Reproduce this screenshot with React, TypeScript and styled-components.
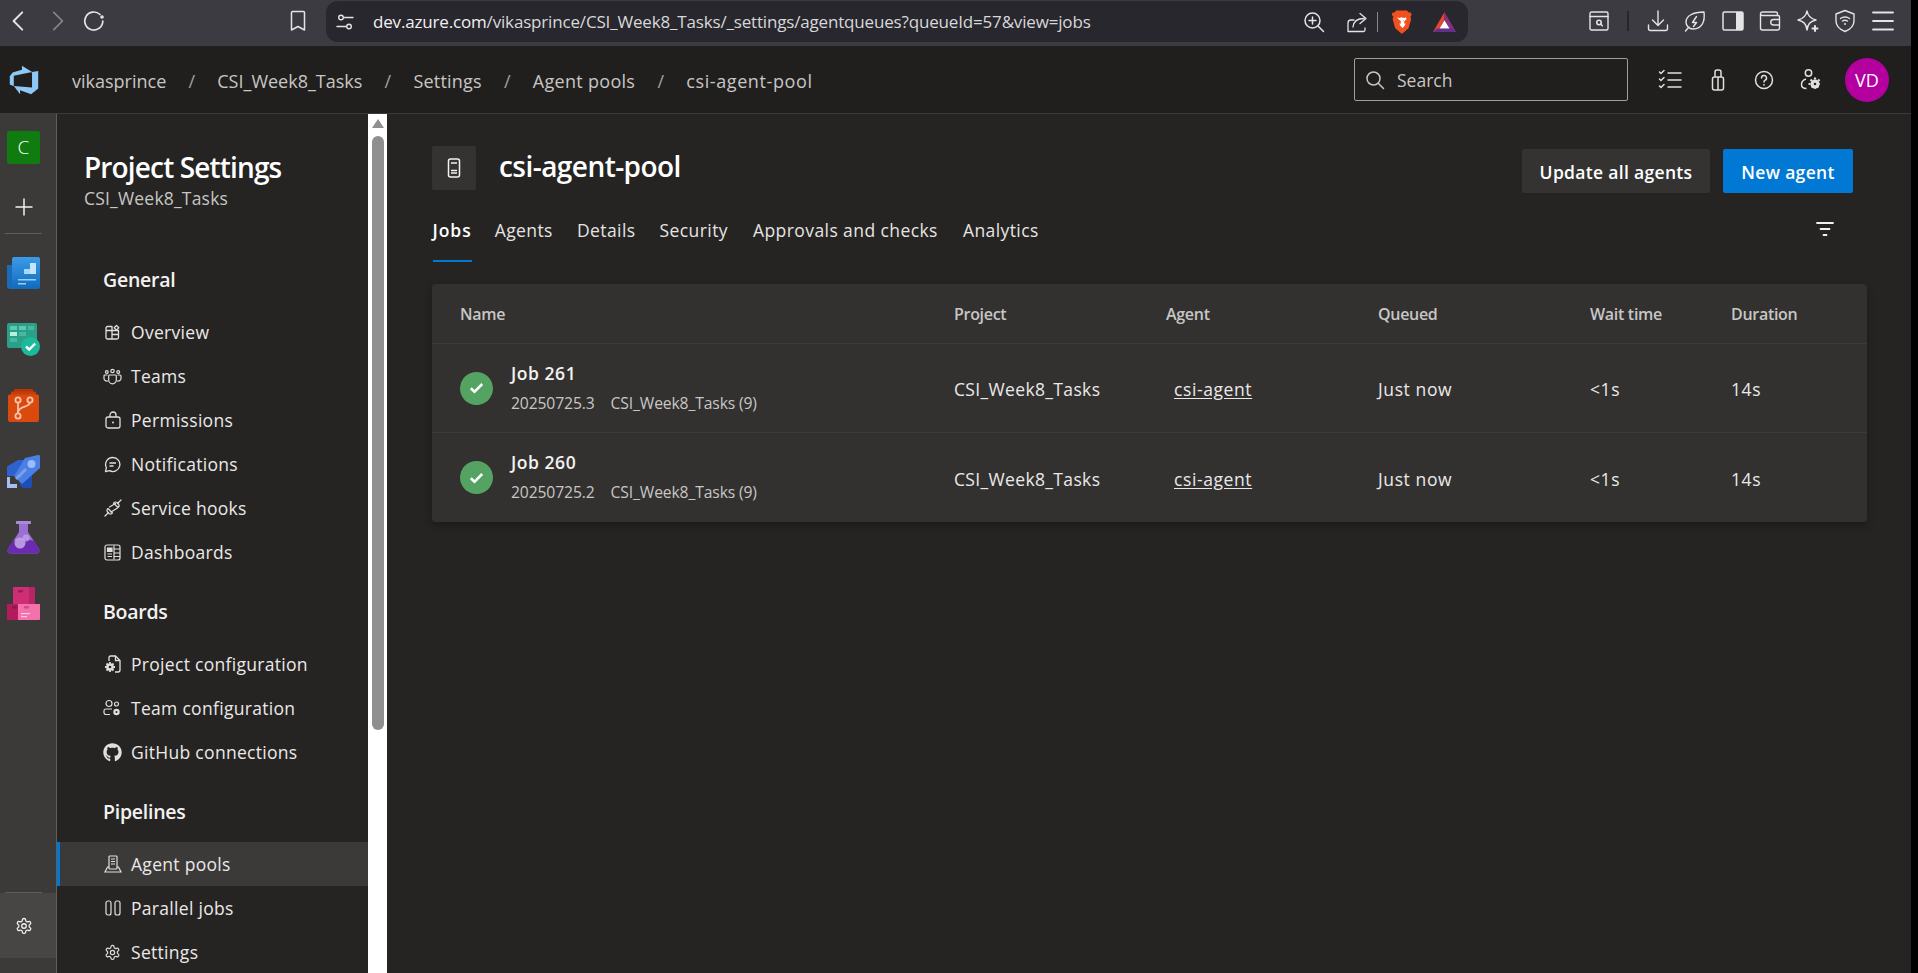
import React from "react";
import styled, { createGlobalStyle } from "styled-components";
import { FaGithub } from "react-icons/fa";

const Global = createGlobalStyle`
  html, body { margin: 0; padding: 0; height: 100%; background: #000; overflow: hidden; }
  body { font-family: "Open Sans", "Noto Sans", "Liberation Sans", sans-serif; }
  * { box-sizing: border-box; }
`;

const Page = styled.div`
  width: 1911px; height: 973px; display: flex; flex-direction: column; overflow: hidden; background: #252423;
`;

/* ---------- browser bar ---------- */
const BrowserBar = styled.div`
  height: 46px; background: #3b3b41; display: flex; align-items: flex-start; color: #e4e4e6; flex: none;
`;
const BrowserSlot = styled.div<{ $w?: number; $dim?: boolean }>`
  width: ${p => p.$w ?? 37.5}px; height: 41px; flex: none; display: flex; align-items: center; justify-content: center;
  color: ${p => (p.$dim ? "#85858b" : "#e4e4e6")};
`;
const BrowserNav = styled.div`
  display: flex; width: 326px; flex: none; padding-left: 0.5px;
`;
const NavGap = styled.div`
  width: 166px; flex: none;
`;
const AddressBar = styled.div`
  width: 1142px; height: 41px; margin-top: 1px; background: #27272d; border-radius: 12px; display: flex; align-items: center;
  padding-left: 8px; flex: none;
`;
const Url = styled.div`
  font-size: 17px; color: #d8d8da; letter-spacing: -0.17px; margin-left: 17px; flex: 1; white-space: nowrap;
`;
const UrlHost = styled.span`
  color: #f1f1f2;
`;
const AddressTail = styled.div`
  display: flex; align-items: center; padding-right: 12.5px; flex: none;
`;
const ZoomGap = styled.div`
  width: 11px; flex: none;
`;
const AddressSep = styled.div`
  width: 1px; height: 20px; background: #88888c; margin-right: 13px; flex: none;
`;
const ToolbarSep = styled.div`
  width: 2px; height: 20px; background: #26262b; margin: 0 10px 0 18px; flex: none;
`;
const BrowserTail = styled.div`
  display: flex; padding-left: 121px; flex: none; align-items: center;
`;

/* ---------- app header ---------- */
const Header = styled.header`
  height: 68px; background: #201f1e; border-bottom: 1px solid #3b3a39; display: flex; align-items: center; flex: none; color: #c8c6c4;
`;
const Logo = styled.div`
  width: 72px; padding-left: 8px; flex: none; display: flex; align-items: center;
`;
const Crumbs = styled.nav`
  display: flex; align-items: center; font-size: 18px; flex: 1; padding-top: 2px;
`;
const Crumb = styled.span<{ $ls: number }>`
  letter-spacing: ${p => p.$ls}px;
`;
const Slash = styled.span`
  width: 51px; text-align: center; color: #a19f9d; flex: none;
`;
const SearchBox = styled.div`
  width: 274px; height: 43px; border: 1px solid #a19f9d; border-radius: 2px; display: flex; align-items: center; padding-left: 10px; gap: 12px;
  font-size: 17.5px; color: #c8c6c4; flex: none; margin-right: 17px;
`;
const HeadIcon = styled.div<{ $w: number }>`
  width: ${p => p.$w}px; flex: none; display: flex; align-items: center; justify-content: center; color: #e1dfdd;
`;
const Avatar = styled.div`
  width: 44px; height: 44px; border-radius: 50%; background: #b4009e; color: #fff; font-size: 18px; display: flex; align-items: center;
  justify-content: center; margin-left: 11px; margin-right: 22px; flex: none;
`;

/* ---------- body ---------- */
const Body = styled.div`
  flex: 1; display: flex; min-height: 0;
`;
const Rail = styled.aside`
  width: 57px; background: #3b3a39; border-right: 1px solid #605e5c; display: flex; flex-direction: column; flex: none;
`;
const RailItem = styled.div<{ $h?: number }>`
  width: 47px; height: ${p => p.$h ?? 66}px; display: flex; align-items: center; justify-content: center; flex: none; color: #f3f2f1;
`;
const ProjectTile = styled.div`
  width: 33px; height: 33px; background: #107c10; border-radius: 2px; color: #fff; font-size: 19px; font-weight: 300; display: flex; align-items: center; justify-content: center;
`;
const RailDivider = styled.div`
  width: 37px; height: 1px; background: #605e5c; margin: 0 0 6px 5px; flex: none;
`;
const RailBottom = styled.div`
  margin-top: auto; flex: none; padding-bottom: 15px;
`;
const RailBottomLine = styled(RailDivider)`
  margin: 0 0 0 5px;
`;
const RailSettings = styled.div`
  width: 56px; height: 65px; background: #484644; display: flex; align-items: center; justify-content: center; color: #f3f2f1; padding-right: 9px;
`;

const Sidebar = styled.nav`
  width: 311px; background: #252423; flex: none; overflow: hidden; padding-top: 35px;
`;
const SidebarTitle = styled.div`
  margin-left: 27px; font-size: 28px; line-height: 36px; font-weight: 600; color: #fff; letter-spacing: -0.85px; white-space: nowrap;
`;
const SidebarSub = styled.div`
  margin-left: 27px; font-size: 17.5px; line-height: 26px; color: #c8c6c4; letter-spacing: 0.2px;
`;
const GroupTitle = styled.div<{ $top: number }>`
  margin: ${p => p.$top}px 0 14px 46px; font-size: 19.5px; line-height: 32px; font-weight: 600; color: #f3f2f1; letter-spacing: -0.25px;
`;
const NavItem = styled.div<{ $active?: boolean }>`
  height: 44px; display: flex; align-items: center; padding-left: ${p => (p.$active ? 43 : 46)}px; gap: 9px; font-size: 17.5px; color: #ebe9e8; letter-spacing: 0.3px;
  background: ${p => (p.$active ? "#3b3a39" : "transparent")};
  border-left: ${p => (p.$active ? "3px solid #0078d4" : "none")};
`;
const NavIcon = styled.span`
  width: 19px; height: 19px; flex: none; display: flex; align-items: center; justify-content: center; color: #e1dfdd;
`;
const ScrollTrack = styled.div`
  width: 19px; background: #fff; flex: none; padding: 5px 3px 0 4px; display: flex; flex-direction: column;
`;
const ScrollArrow = styled.div`
  width: 0; height: 0; border-left: 6px solid transparent; border-right: 6px solid transparent; border-bottom: 9px solid #8f8f8f; flex: none;
`;
const ScrollThumb = styled.div`
  height: 594px; margin-top: 8px; background: #8f8f8f; border-radius: 6px; flex: none; width: 12px;
`;

const Main = styled.main`
  flex: 1; min-width: 0; padding: 32px 44px 0 45px; background: #252423; color: #f3f2f1;
`;
const TitleRow = styled.div`
  display: flex; align-items: flex-start; height: 44px;
`;
const TitleIcon = styled.div`
  width: 44px; height: 44px; background: #343332; border-radius: 2px; display: flex; align-items: center; justify-content: center; color: #f3f2f1; flex: none;
`;
const Title = styled.h1`
  margin: 0 0 0 23px; font-size: 28px; line-height: 40px; font-weight: 600; color: #fff; letter-spacing: -0.55px; flex: 1;
`;
const Button = styled.button<{ $primary?: boolean }>`
  height: 44px; margin-top: 3px; border: none; border-radius: 2px; font-family: inherit; font-size: 17.5px; font-weight: 600; letter-spacing: 0.32px;
  color: #fff; background: ${p => (p.$primary ? "#0078d4" : "#343332")}; width: ${p => (p.$primary ? 130 : 188)}px; margin-left: 13px; padding: 1px 0 0;
  margin-right: ${p => (p.$primary ? 14 : 0)}px; flex: none;
`;
const TabBar = styled.div`
  display: flex; margin-top: 16px; height: 56px; padding-left: 0.5px;
`;
const Tab = styled.div<{ $active?: boolean; $gap: number }>`
  height: 56px; line-height: 48px; font-size: 17.5px; letter-spacing: ${p => (p.$active ? 0.95 : 0.42)}px; margin-right: ${p => p.$gap}px;
  font-weight: ${p => (p.$active ? 600 : 400)}; color: ${p => (p.$active ? "#fff" : "#e6e4e3")};
  border-bottom: 2px solid ${p => (p.$active ? "#0078d4" : "transparent")};
`;
const FilterBtn = styled.div`
  margin-left: auto; margin-right: 33px; height: 48px; display: flex; align-items: center; padding-bottom: 3px; color: #f3f2f1;
`;
const Card = styled.section`
  margin-top: 22px; background: #323130; border-radius: 4px; box-shadow: 0 3px 8px rgba(0,0,0,.3);
`;
const Row = styled.div<{ $h: number; $last?: boolean }>`
  display: grid; grid-template-columns: 494px 212px 212px 212px 141px 1fr; padding-left: 28px; align-items: center;
  height: ${p => p.$h}px; border-bottom: ${p => (p.$last ? "none" : "1px solid #3b3a39")};
`;
const Th = styled.div`
  font-size: 16px; font-weight: 600; color: #c8c6c4; letter-spacing: -0.3px;
`;
const Td = styled.div`
  font-size: 17.5px; color: #ebe9e8; letter-spacing: 0.35px; white-space: nowrap; padding-top: 2px;
`;
const AgentLink = styled.a`
  margin-left: 8px; color: #ebe9e8; text-decoration: underline; text-underline-offset: 2px; letter-spacing: 0.6px;
`;
const PlainValue = styled.span`
  letter-spacing: 0.6px;
`;
const JobCell = styled.div`
  display: flex; align-items: center; gap: 18px;
`;
const JobStatus = styled.div`
  width: 33px; height: 33px; border-radius: 50%; background: #55a362; display: flex; align-items: center; justify-content: center; flex: none;
`;
const JobText = styled.div`
  display: flex; flex-direction: column; gap: 5px; margin-top: -2px;
`;
const JobName = styled.div`
  font-size: 17.5px; line-height: 26px; font-weight: 600; color: #f3f2f1; letter-spacing: 0.55px;
`;
const JobMeta = styled.div`
  font-size: 15.7px; line-height: 24px; color: #c8c6c4; letter-spacing: -0.13px; display: flex; gap: 16px;
`;

/* ---------- icons ---------- */
const Ico = styled.svg.attrs<{ $s?: number; $sw?: number }>(p => ({
  width: p.$s ?? 24, height: p.$s ?? 24, fill: "none", stroke: "currentColor", strokeWidth: p.$sw ?? 1.5,
  strokeLinecap: "round", strokeLinejoin: "round",
}))<{ $s?: number; $sw?: number }>`
  display: block; flex: none;
`;

const Gear = ({ s = 18 }: { s?: number }) => (
  <Ico $s={s} $sw={1.7} viewBox="0 0 24 24">
    <path d="M12.2 2h-.4a2 2 0 0 0-2 2v.2a2 2 0 0 1-1 1.7l-.4.3a2 2 0 0 1-2 0l-.2-.1a2 2 0 0 0-2.7.7l-.2.4a2 2 0 0 0 .7 2.7l.2.1a2 2 0 0 1 1 1.7v.5a2 2 0 0 1-1 1.7l-.2.1a2 2 0 0 0-.7 2.7l.2.4a2 2 0 0 0 2.7.7l.2-.1a2 2 0 0 1 2 0l.4.3a2 2 0 0 1 1 1.7v.2a2 2 0 0 0 2 2h.4a2 2 0 0 0 2-2v-.2a2 2 0 0 1 1-1.7l.4-.3a2 2 0 0 1 2 0l.2.1a2 2 0 0 0 2.7-.7l.2-.4a2 2 0 0 0-.7-2.7l-.2-.1a2 2 0 0 1-1-1.7v-.5a2 2 0 0 1 1-1.7l.2-.1a2 2 0 0 0 .7-2.7l-.2-.4a2 2 0 0 0-2.7-.7l-.2.1a2 2 0 0 1-2 0l-.4-.3a2 2 0 0 1-1-1.7V4a2 2 0 0 0-2-2z" />
    <circle cx="12" cy="12" r="3" />
  </Ico>
);

const AdoLogo = () => (
  <svg width="32" height="32" viewBox="0 0 18 18">
    <path fill="#8ec8f6" d="M17 4v9.74l-4 3.28-6.2-2.26V17l-3.51-4.59 10.23.8V4.44zm-3.41.49L7.85 1v2.29L2.58 4.84 1 6.87v4.61l2.26 1V6.57z" />
  </svg>
);

const BraveIcon = () => (
  <svg width="21" height="24" viewBox="0 0 21 24">
    <path fill="#f1501f" d="M5 0.5h11l1.5 1.8 2.5.4.6 2-1.2 2.2.8 2-2.6 9.3-5.6 4.9c-.9.7-1.3.7-2.2 0l-5.6-4.9L1.6 8.9l.8-2L.8 4.7l.6-2 2.5-.4z" />
    <path fill="#fff" d="M6 7.5l3 .4 1.5-1 1.5 1 3-.4.6 1.6-2.6 2.6.6 2.2 1-.6-.6 2-2.2 2.5h-.6l-2.2-2.5-.6-2 1 .6.6-2.2-2.6-2.6z" />
    <path fill="#f1501f" d="M8 10.3l1.4.4-.6.9zM13 10.3l-1.4.4.6.9z" />
  </svg>
);
const BatIcon = () => (
  <svg width="23" height="20" viewBox="0 0 23 20">
    <path fill="#e8452e" d="M11.5 0L0 20h4.5L11.5 8z" />
    <path fill="#8b2f7f" d="M11.5 0L23 20h-4.5L11.5 8z" />
    <path fill="#662d91" d="M0 20h23l-4-3.6H4z" />
    <path fill="#fff" d="M11.5 8.2L16.5 16.5h-10z" />
  </svg>
);

const OverviewApp = () => (
  <svg width="33" height="32" viewBox="0 0 33 32">
    <defs><linearGradient id="ov" x1="0" y1="0" x2="0" y2="1"><stop offset="0" stopColor="#3c9be8" /><stop offset="1" stopColor="#0f6cbd" /></linearGradient></defs>
    <path fill="#1a6cba" d="M0 8h10v24H3a3 3 0 0 1-3-3z" />
    <path fill="url(#ov)" d="M5 2a2 2 0 0 1 2-2h24a2 2 0 0 1 2 2v28a2 2 0 0 1-2 2H9l-4-2z" />
    <path fill="#a7d8fb" d="M11 17h6v-5h6V6h6v11z" />
    <path fill="#d9effd" opacity=".6" d="M23 6h6v11h-6z" />
    <rect x="11" y="22" width="18" height="1.5" fill="#9ccdf2" />
    <rect x="11" y="26" width="8" height="1.5" fill="#9ccdf2" />
  </svg>
);
const BoardsApp = () => (
  <svg width="33" height="33" viewBox="0 0 33 33">
    <rect x="0" y="0" width="30" height="25" rx="2" fill="#2b9f87" />
    <rect x="3" y="3" width="7" height="4" fill="#5cc9b0" /><rect x="12" y="3" width="7" height="4" fill="#5cc9b0" /><rect x="21" y="3" width="6" height="4" fill="#45b89f" />
    <rect x="3" y="9" width="7" height="4" fill="#b6f0df" /><rect x="12" y="9" width="7" height="4" fill="#45b89f" />
    <rect x="3" y="15" width="7" height="4" fill="#45b89f" />
    <circle cx="23.5" cy="23.5" r="9.5" fill="#1cb99a" />
    <path d="M19 23.5l3.2 3 6-6" stroke="#fff" strokeWidth="2.4" fill="none" />
  </svg>
);
const ReposApp = () => (
  <svg width="31" height="33" viewBox="0 0 31 33">
    <rect x="6" y="0" width="19" height="6" rx="1" fill="#b93404" />
    <rect x="3" y="2.5" width="25" height="6" rx="1" fill="#c53d08" />
    <path fill="#da4a0f" d="M0 7a1.5 1.5 0 0 1 1.500-1.500h28A1.500 1.500 0 0 1 31 7v24a2 2 0 0 1-2 2H2a2 2 0 0 1-2-2z" />
    <g fill="none" stroke="#fbc2a8" strokeWidth="1.8">
      <circle cx="10" cy="11" r="2.6" /><circle cx="22" cy="11" r="2.6" /><circle cx="10" cy="27" r="2.6" />
      <path d="M10 13.600v10.800M22 13.600c0 5-12 3-12 10" />
    </g>
  </svg>
);
const PipelinesApp = () => (
  <svg width="33" height="33" viewBox="0 0 33 33">
    <path fill="#2f62cf" d="M0 11.500L11 5h9L10 21H1a1 1 0 0 1-1-1z" />
    <path fill="#1c4eb8" d="M12 25l13-11v17a2 2 0 0 1-2 2h-7l-3-3z" />
    <path fill="#4a7fe6" d="M18 3L31 0a1.800 1.800 0 0 1 2 2v11L15 29l-8-8z" />
    <circle cx="24.500" cy="9" r="4" fill="#9cbcf5" />
    <path d="M9 24l10-10" stroke="#7ba1ee" strokeWidth="3" />
    <path fill="#a6bff2" d="M0 22h3v7h7v4H0z" />
  </svg>
);
const TestApp = () => (
  <svg width="33" height="33" viewBox="0 0 33 33">
    <rect x="9" y="0" width="15" height="3" rx=".5" fill="#a98ad8" />
    <path fill="#9a6fd4" d="M12 3h9v8l11 17a3 3 0 0 1-2.500 4.500H3.500A3 3 0 0 1 1 28l11-17z" />
    <path fill="#6b2bb1" d="M6 20c6-2 15-2 21 0l5 8a3 3 0 0 1-2.500 4.500H3.500A3 3 0 0 1 1 28z" />
    <circle cx="13" cy="22" r="5.500" fill="#c6a9ea" opacity=".85" />
    <circle cx="19" cy="17" r="3.500" fill="#bfa1e6" opacity=".8" />
  </svg>
);
const ArtifactsApp = () => (
  <svg width="33" height="33" viewBox="0 0 33 33">
    <path fill="#cf2d75" d="M6 1a1 1 0 0 1 1-1h20a1 1 0 0 1 1 1v16H6z" />
    <path fill="#b82566" d="M22 0h5a1 1 0 0 1 1 1v16h-6z" />
    <rect x="11" y="3" width="5" height="2.500" rx="1" fill="#a01c57" />
    <path fill="#b31c5c" d="M0 17h11v16H1a1 1 0 0 1-1-1z" />
    <rect x="5" y="19" width="5" height="2.500" rx="1" fill="#8c1549" />
    <path fill="#f472ab" d="M11 17h22v15a1 1 0 0 1-1 1H11z" />
    <rect x="17" y="19" width="5" height="2.500" rx="1" fill="#d44a88" />
    <rect x="14" y="26" width="9" height="1.200" fill="#fbc9df" /><rect x="14" y="29" width="6" height="1.200" fill="#fbc9df" />
  </svg>
);

const navIcons: Record<string, React.ReactNode> = {
  overview: (
    <Ico $s={17} $sw={1.3} viewBox="0 0 17 17">
      <path d="M2 6.500h12.500v7a1.500 1.500 0 0 1-1.500 1.500H3.500A1.500 1.500 0 0 1 2 13.500zM2 6.500V4a1.500 1.500 0 0 1 1.500-1.500H8V15M8 10.500h6.500" />
      <path d="M12.500 1.500l2.300 2.300-2.300 2.300-2.300-2.300z" />
    </Ico>
  ),
  teams: (
    <Ico $s={19} $sw={1.2} viewBox="0 0 19 19">
      <circle cx="9.500" cy="4" r="1.700" /><circle cx="3.800" cy="5" r="1.400" /><circle cx="15.200" cy="5" r="1.400" />
      <path d="M6.500 8h6a.8.8 0 0 1 .8.800V13a3.800 3.800 0 0 1-7.600 0V8.800a.8.8 0 0 1 .8-.8zM4 8H2a1 1 0 0 0-1 1v2.500A2.800 2.800 0 0 0 4.500 14M15 8h2a1 1 0 0 1 1 1v2.500a2.800 2.800 0 0 1-3.500 2.500" />
    </Ico>
  ),
  lock: (
    <svg width="16" height="18" viewBox="0 0 16 18" fill="none" stroke="currentColor" strokeWidth="1.300">
      <rect x="1" y="6" width="14" height="11" rx="2" />
      <path d="M5 6V4a3 3 0 0 1 6 0v2" />
      <circle cx="8" cy="11.500" r="1" fill="currentColor" stroke="none" />
    </svg>
  ),
  chat: (
    <svg width="17" height="17" viewBox="0 0 17 17" fill="none" stroke="currentColor" strokeWidth="1.300" strokeLinejoin="round">
      <path d="M8.800 1.500a7 7 0 1 1-3.200 13.200L1.500 15.600l.9-3.900A7 7 0 0 1 8.800 1.500z" />
      <path d="M5.500 7h6.500M5.500 10h4" />
    </svg>
  ),
  hook: (
    <Ico $s={18} $sw={1.2} viewBox="0 0 18 18">
      <path d="M1 17l3.500-3.500M13.500 4.500L17 1" />
      <path d="M4 9.500l4.500 4.500a2.500 2.500 0 0 1-3.500.500L3.500 13A2.500 2.500 0 0 1 4 9.500zM9.500 4l4.500 4.500a2.500 2.500 0 0 0 .500-3.500L13 3.500A2.500 2.500 0 0 0 9.500 4z" />
      <path d="M5.500 8l6-3.500M7 13l6.500-4" />
    </Ico>
  ),
  dash: (
    <svg width="17" height="17" viewBox="0 0 17 17" fill="none" stroke="currentColor" strokeWidth="1.200">
      <rect x="1" y="1" width="15" height="15" rx="2" />
      <path d="M3.500 4h4.500v3.500H3.500z" fill="currentColor" />
      <path d="M3.500 10h4.500M3.500 12.500h4.500M10 1.500v14M10 5h6M10 9h6M10 12.500h6" />
    </svg>
  ),
  projcfg: (
    <svg width="18" height="18" viewBox="0 0 18 18" fill="none" stroke="currentColor" strokeWidth="1.300">
      <path d="M5 6V2.500A1.500 1.500 0 0 1 6.500 1h5L16 5.500V15a2 2 0 0 1-2 2h-3" />
      <path d="M11.500 1v4.500H16" />
      <circle cx="6" cy="12" r="3.800" fill="currentColor" stroke="none" />
      <circle cx="6" cy="12" r="1.300" fill="#252423" stroke="none" />
      <path d="M6 7v10M1 12h10M2.500 8.500l7 7M9.500 8.500l-7 7" strokeWidth="1.800" strokeDasharray="1.800 6.400" />
    </svg>
  ),
  teamcfg: (
    <svg width="19" height="18" viewBox="0 0 19 18" fill="none" stroke="currentColor" strokeWidth="1.200">
      <circle cx="6" cy="4.500" r="3" /><circle cx="13.500" cy="5" r="2" />
      <path d="M1 14V12a2 2 0 0 1 2-2h6M1 14a2 2 0 0 0 2 1.500h4" />
      <circle cx="13.500" cy="13" r="3.200" fill="currentColor" stroke="none" />
      <circle cx="13.500" cy="13" r="1" fill="#252423" stroke="none" />
    </svg>
  ),
  agent: (
    <svg width="18" height="18" viewBox="0 0 18 18" fill="none" stroke="currentColor" strokeWidth="1.200">
      <rect x="5" y="1" width="8" height="13" rx=".8" />
      <path d="M7 4h4M7 6.500h4M7 9h4" />
      <path d="M5 12H3.500L1 17h16l-2.500-5H13" />
    </svg>
  ),
  parallel: (
    <svg width="16" height="16" viewBox="0 0 16 16" fill="none" stroke="currentColor" strokeWidth="1.200">
      <rect x="1" y="1" width="5" height="14" rx="2" /><rect x="10" y="1" width="5" height="14" rx="2" />
    </svg>
  ),
};

const Item = ({ icon, label, active }: { icon: React.ReactNode; label: string; active?: boolean }) => (
  <NavItem $active={active}><NavIcon>{icon}</NavIcon>{label}</NavItem>
);

const Check = () => (
  <svg width="15" height="12" viewBox="0 0 15 12"><path d="M1.800 6.300l3.700 3.500 7.700-7.800" fill="none" stroke="#fff" strokeWidth="2.600" /></svg>
);

const JobRow = ({ name, build, last }: { name: string; build: string; last?: boolean }) => (
  <Row $h={89} $last={last}>
    <JobCell>
      <JobStatus><Check /></JobStatus>
      <JobText>
        <JobName>{name}</JobName>
        <JobMeta><span>{build}</span><span>CSI_Week8_Tasks (9)</span></JobMeta>
      </JobText>
    </JobCell>
    <Td>CSI_Week8_Tasks</Td>
    <Td><AgentLink>csi-agent</AgentLink></Td>
    <Td><PlainValue>Just now</PlainValue></Td>
    <Td><PlainValue>&lt;1s</PlainValue></Td>
    <Td><PlainValue>14s</PlainValue></Td>
  </Row>
);

export default function App() {
  return (
    <>
      <Global />
      <Page>
        <BrowserBar>
          <BrowserNav>
            <BrowserSlot><Ico $s={26} $sw={1.8} viewBox="0 0 24 24"><path d="M15 4l-8 8 8 8" /></Ico></BrowserSlot>
            <BrowserSlot $dim><Ico $s={26} $sw={1.6} viewBox="0 0 24 24"><path d="M9 4l8 8-8 8" /></Ico></BrowserSlot>
            <BrowserSlot>
              <Ico $s={24} $sw={1.7} viewBox="0 0 24 24"><path d="M18 5.500A9 9 0 1 0 20.800 12" /><circle cx="20" cy="8" r="1.800" fill="currentColor" stroke="none" /></Ico>
            </BrowserSlot>
            <NavGap />
            <BrowserSlot $w={37}><Ico $s={24} $sw={1.5} viewBox="0 0 24 24"><path d="M5.500 3.500a1 1 0 0 1 1-1h11a1 1 0 0 1 1 1V21L12 17.500 5.500 21z" /></Ico></BrowserSlot>
          </BrowserNav>
          <AddressBar>
            <Ico $s={22} $sw={1.4} viewBox="0 0 22 22"><circle cx="7" cy="6.500" r="2.300" /><circle cx="15" cy="15.500" r="2.300" /><path d="M10 6.500h9M3 15.500h9" /></Ico>
            <Url><UrlHost>dev.azure.com</UrlHost>/vikasprince/CSI_Week8_Tasks/_settings/agentqueues?queueId=57&amp;view=jobs</Url>
            <AddressTail>
              <Ico $s={24} $sw={1.5} viewBox="0 0 24 24"><circle cx="10.500" cy="10.500" r="7.500" /><path d="M16 16l5.500 5.500M10.500 7v7M7 10.500h7" /></Ico>
              <ZoomGap />
              <BrowserSlot $w={40}><Ico $s={22} $sw={1.3} viewBox="0 0 22 22"><path d="M2 20.500V12a3 3 0 0 1 3-3h3M2 20.500h15.500a1.500 1.500 0 0 0 1.500-1.500v-2M7 16c.5-5.500 4-8.500 11-8.500M14 2.500L20 7.500l-6 5" /></Ico></BrowserSlot>
              <AddressSep />
              <BraveIcon />
              <BrowserSlot $w={21} />
              <BatIcon />
            </AddressTail>
          </AddressBar>
          <BrowserTail>
            <BrowserSlot $w={20}>
              <Ico $s={20} $sw={1.4} viewBox="0 0 20 20"><rect x="1" y="1" width="18" height="18" rx="1.500" /><path d="M1 5.500h18" /><circle cx="10" cy="11.500" r="2.200" strokeWidth="1.600" /><path d="M11.800 13.300l1.500 1.500" strokeWidth="1.600" /></Ico>
            </BrowserSlot>
            <ToolbarSep />
            <BrowserSlot><Ico $s={24} $sw={1.4} viewBox="0 0 24 24"><path d="M12 2v14M6.500 11l5.500 5.500 5.500-5.500M2.500 16v3.500a2 2 0 0 0 2 2h15a2 2 0 0 0 2-2V16" /></Ico></BrowserSlot>
            <BrowserSlot><Ico $s={24} $sw={1.4} viewBox="0 0 24 24"><path d="M21 3c1 8-1 17-11 17-4 0-7-3-7-7 0-6 7-10 18-10zM2.500 22L6 18M13.500 7.500l-4 6h4l-3 4" /></Ico></BrowserSlot>
            <BrowserSlot>
              <svg width="22" height="20" viewBox="0 0 22 20"><rect x="1" y="1" width="20" height="18" rx="1.500" fill="none" stroke="currentColor" strokeWidth="1.500" /><rect x="14" y="1" width="7" height="18" fill="currentColor" /></svg>
            </BrowserSlot>
            <BrowserSlot><Ico $s={22} $sw={1.400} viewBox="0 0 22 22"><path d="M1.500 4v14a2 2 0 0 0 2 2h15a2 2 0 0 0 2-2v-3M1.500 4a2 2 0 0 1 2-2h13a2 2 0 0 1 2 2v1.500h-15A2 2 0 0 1 1.500 4zM20.500 9.500V7a1.500 1.500 0 0 0-1.500-1.500M20.500 9.500h-6a2.700 2.700 0 0 0 0 5.500h6z" /></Ico></BrowserSlot>
            <BrowserSlot>
              <Ico $s={24} $sw={1.500} viewBox="0 0 24 24"><path d="M11 2c.8 5 3 7.500 9 9-6 1.500-8.200 4-9 10-.8-6-3-8.500-9-10 6-1.500 8.200-4 9-9z" /><path d="M19 17v5M16.500 19.500h5" strokeWidth="2" /></Ico>
            </BrowserSlot>
            <BrowserSlot><Ico $s={24} $sw={1.400} viewBox="0 0 24 24"><path d="M12 1.500L21 5v7c0 5-4 8.500-9 10.500-5-2-9-5.500-9-10.500V5z" /><path d="M7.500 9.500c2.500-2 6.500-2 9 0M9.500 12c1.500-1 3.500-1 5 0" /><circle cx="12" cy="15" r="1" fill="currentColor" stroke="none" /></Ico></BrowserSlot>
            <BrowserSlot><Ico $s={24} $sw={1.800} viewBox="0 0 24 24"><path d="M2 3.500h20M2 12h20M2 20.500h20" /></Ico></BrowserSlot>
          </BrowserTail>
        </BrowserBar>

        <Header>
          <Logo><AdoLogo /></Logo>
          <Crumbs>
            <Crumb $ls={0}>vikasprince</Crumb><Slash>/</Slash>
            <Crumb $ls={0}>CSI_Week8_Tasks</Crumb><Slash>/</Slash>
            <Crumb $ls={0.2}>Settings</Crumb><Slash>/</Slash>
            <Crumb $ls={0.3}>Agent pools</Crumb><Slash>/</Slash>
            <Crumb $ls={0.6}>csi-agent-pool</Crumb>
          </Crumbs>
          <SearchBox>
            <Ico $s={20} $sw={1.500} viewBox="0 0 20 20"><circle cx="8.500" cy="8.500" r="6.500" /><path d="M13.500 13.500l5 5" /></Ico>
            Search
          </SearchBox>
          <HeadIcon $w={49}><Ico $s={24} $sw={1.500} viewBox="0 0 24 24"><path d="M10 5h13M10 12h13M10 19h13M1.500 4l1.500 1.500L6 2.500M1.500 11l1.500 1.500L6 9.500M1.500 18l1.500 1.500L6 16.500" /></Ico></HeadIcon>
          <HeadIcon $w={47}><Ico $s={22} $sw={1.500} viewBox="0 0 22 22"><path d="M5.500 10a2 2 0 0 1 2-2h7a2 2 0 0 1 2 2v9a2 2 0 0 1-2 2h-7a2 2 0 0 1-2-2zM8 8V3a2 2 0 0 1 2-2h2a2 2 0 0 1 2 2v5M11 8v13" /></Ico></HeadIcon>
          <HeadIcon $w={46}><Ico $s={20} $sw={1.500} viewBox="0 0 20 20"><circle cx="10" cy="10" r="8.500" /><path d="M7.500 8a2.500 2.500 0 1 1 3.700 2.200c-.8.500-1.200 1-1.200 1.800" /><circle cx="10" cy="14.800" r=".9" fill="currentColor" stroke="none" /></Ico></HeadIcon>
          <HeadIcon $w={47}>
            <svg width="24" height="24" viewBox="0 0 24 24" fill="none" stroke="currentColor" strokeWidth="1.500"><circle cx="9.500" cy="5" r="3.200" /><path d="M7 11c-3 1-4.500 3-4.500 5.500 0 2.500 2 4 5 4" />
              <circle cx="16" cy="16" r="4.500" fill="currentColor" stroke="none" /><circle cx="16" cy="16" r="1.300" fill="#201f1e" stroke="none" />
              <path d="M16 9.500v13M9.500 16h13M11.500 11.500l9 9M20.500 11.500l-9 9" strokeWidth="2.200" strokeDasharray="2 7.200" />
            </svg>
          </HeadIcon>
          <Avatar>VD</Avatar>
        </Header>

        <Body>
          <Rail>
            <RailItem><ProjectTile>C</ProjectTile></RailItem>
            <RailItem $h={53}><Ico $s={18} $sw={1.500} viewBox="0 0 18 18"><path d="M9 1v16M1 9h16" /></Ico></RailItem>
            <RailDivider />
            <RailItem><OverviewApp /></RailItem>
            <RailItem><BoardsApp /></RailItem>
            <RailItem><ReposApp /></RailItem>
            <RailItem><PipelinesApp /></RailItem>
            <RailItem><TestApp /></RailItem>
            <RailItem><ArtifactsApp /></RailItem>
            <RailBottom>
              <RailBottomLine />
              <RailSettings><Gear /></RailSettings>
            </RailBottom>
          </Rail>

          <Sidebar>
            <SidebarTitle>Project Settings</SidebarTitle>
            <SidebarSub>CSI_Week8_Tasks</SidebarSub>
            <GroupTitle $top={53}>General</GroupTitle>
            <Item icon={navIcons.overview} label="Overview" />
            <Item icon={navIcons.teams} label="Teams" />
            <Item icon={navIcons.lock} label="Permissions" />
            <Item icon={navIcons.chat} label="Notifications" />
            <Item icon={navIcons.hook} label="Service hooks" />
            <Item icon={navIcons.dash} label="Dashboards" />
            <GroupTitle $top={22}>Boards</GroupTitle>
            <Item icon={navIcons.projcfg} label="Project configuration" />
            <Item icon={navIcons.teamcfg} label="Team configuration" />
            <Item icon={<FaGithub size={19} />} label="GitHub connections" />
            <GroupTitle $top={22}>Pipelines</GroupTitle>
            <Item icon={navIcons.agent} label="Agent pools" active />
            <Item icon={navIcons.parallel} label="Parallel jobs" />
            <Item icon={<Gear s={17} />} label="Settings" />
          </Sidebar>
          <ScrollTrack><ScrollArrow /><ScrollThumb /></ScrollTrack>

          <Main>
            <TitleRow>
              <TitleIcon>
                <svg width="14" height="20" viewBox="0 0 14 20" fill="none" stroke="currentColor" strokeWidth="1.500"><rect x="1.500" y="1" width="11" height="18" rx="2" /><path d="M4 5h6M4 12.500h6M4 15h6" /></svg>
              </TitleIcon>
              <Title>csi-agent-pool</Title>
              <Button>Update all agents</Button>
              <Button $primary>New agent</Button>
            </TitleRow>
            <TabBar>
              <Tab $active $gap={23}>Jobs</Tab>
              <Tab $gap={24}>Agents</Tab>
              <Tab $gap={24}>Details</Tab>
              <Tab $gap={25}>Security</Tab>
              <Tab $gap={25}>Approvals and checks</Tab>
              <Tab $gap={0}>Analytics</Tab>
              <FilterBtn>
                <Ico $s={18} $sw={1.800} viewBox="0 0 18 18"><path d="M1 3h16M4.500 9h9M7.500 15h3" /></Ico>
              </FilterBtn>
            </TabBar>
            <Card>
              <Row $h={60}>
                <Th>Name</Th><Th>Project</Th><Th>Agent</Th><Th>Queued</Th><Th>Wait time</Th><Th>Duration</Th>
              </Row>
              <JobRow name="Job 261" build="20250725.3" />
              <JobRow name="Job 260" build="20250725.2" last />
            </Card>
          </Main>
        </Body>
      </Page>
    </>
  );
}
